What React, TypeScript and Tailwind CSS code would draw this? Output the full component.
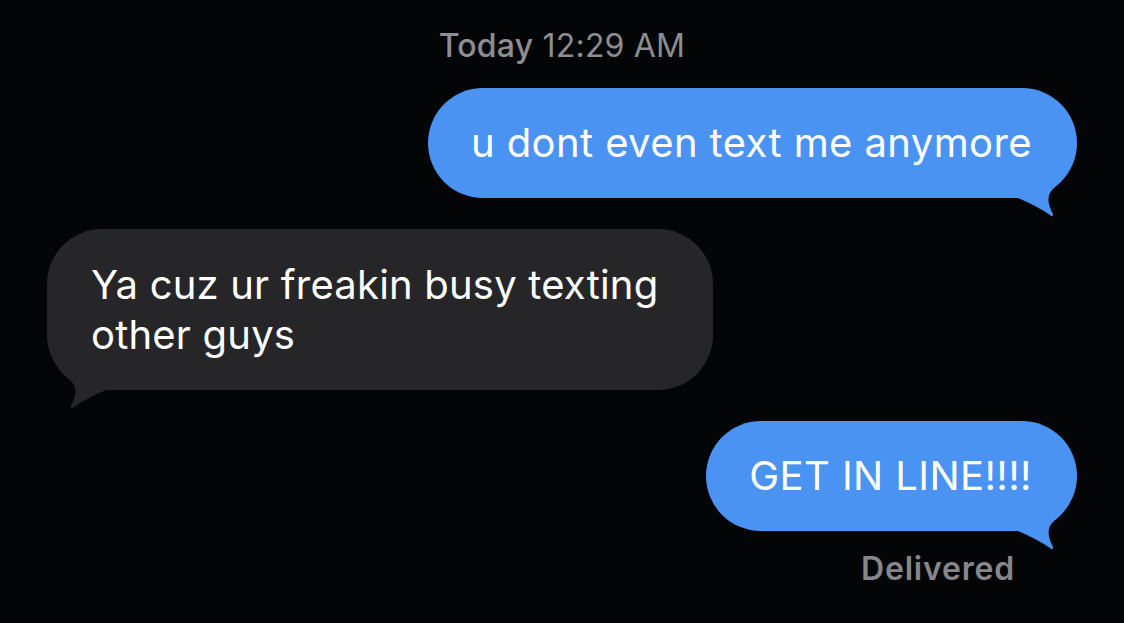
import React from "react";

const BLUE = "#4a93f3";

function TailRight({ color }: { color: string }) {
  return (
    <svg
      className="absolute right-0 bottom-[-20px] w-[60px] h-[60px]"
      viewBox="0 0 60 60"
    >
      <path
        d="M 1 40 Q 20 48 33 57 Q 36 60 36 56 C 32 48 28 38 37 30 L 37 0 L 1 0 Z"
        fill={color}
      />
    </svg>
  );
}

function TailLeft({ color }: { color: string }) {
  return (
    <svg
      className="absolute left-0 bottom-[-20px] w-[60px] h-[60px]"
      viewBox="0 0 60 60"
    >
      <path
        d="M 59 40 Q 40 48 27 57 Q 24 60 24 56 C 28 48 32 38 23 30 L 23 0 L 59 0 Z"
        fill={color}
      />
    </svg>
  );
}

export default function App() {
  return (
    <div
      className="w-[1124px] h-[623px] bg-[#030507] overflow-hidden flex flex-col px-[47px] pt-[27px]"
      style={{ fontFamily: "Inter, 'Noto Sans', sans-serif" }}
    >
      <div className="text-center text-[32px] leading-[38px] tracking-[0.2px] text-[#8d8d92]">
        <span className="font-medium">Today</span> 12:29 AM
      </div>

      <div className="flex justify-end mt-[23px]">
        <div className="relative bg-[#4a93f3] rounded-[55px] h-[110px] pl-[43px] pr-[45px] flex items-center">
          <TailRight color={BLUE} />
          <span className="relative text-white text-[40px] leading-[50px] tracking-[0.4px]">
            u dont even text me anymore
          </span>
        </div>
      </div>

      <div className="flex justify-start mt-[31px]">
        <div className="relative bg-[#262629] rounded-[55px] h-[161px] w-[666px] pl-[44px] flex items-center">
          <TailLeft color="#262629" />
          <span className="relative text-white text-[40px] leading-[50px] tracking-[0.2px]">
            Ya cuz ur freakin busy texting
            <br />
            other guys
          </span>
        </div>
      </div>

      <div className="flex justify-end mt-[31px]">
        <div className="relative bg-[#4a93f3] rounded-[55px] h-[110px] pl-[43px] pr-[45px] flex items-center">
          <TailRight color={BLUE} />
          <span className="relative text-white text-[40px] leading-[50px] tracking-[0.4px]">
            GET IN LINE!!!!
          </span>
        </div>
      </div>

      <div className="flex justify-end pr-[62px] mt-[19px]">
        <span className="text-[32px] leading-[38px] tracking-[0.8px] font-semibold text-[#86868b]">
          Delivered
        </span>
      </div>
    </div>
  );
}
